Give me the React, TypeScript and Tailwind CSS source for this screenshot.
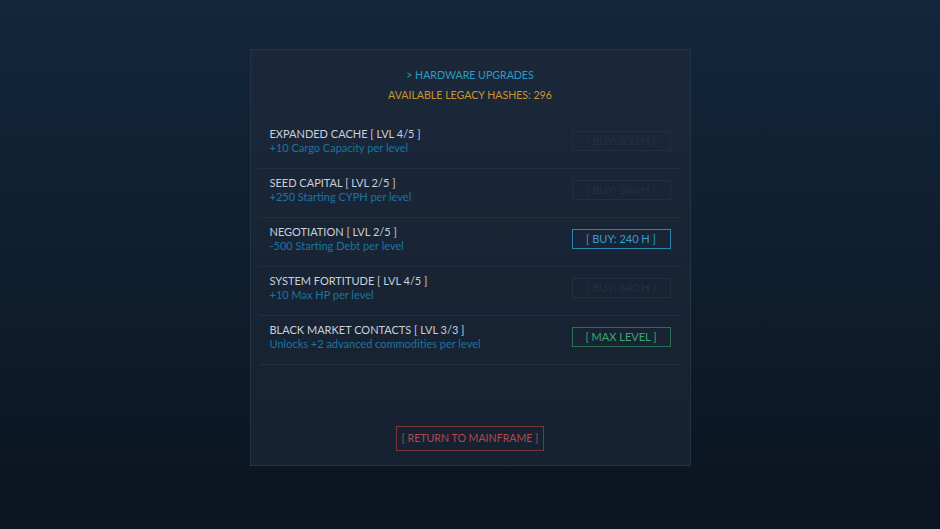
const upgrades = [
  { name: 'EXPANDED CACHE', lvl: '4/5', desc: '+10 Cargo Capacity per level', state: 'locked', label: '[ BUY: 800 H ]' },
  { name: 'SEED CAPITAL', lvl: '2/5', desc: '+250 Starting CYPH per level', state: 'locked', label: '[ BUY: 360 H ]' },
  { name: 'NEGOTIATION', lvl: '2/5', desc: '-500 Starting Debt per level', state: 'buy', label: '[ BUY: 240 H ]' },
  { name: 'SYSTEM FORTITUDE', lvl: '4/5', desc: '+10 Max HP per level', state: 'locked', label: '[ BUY: 640 H ]' },
  { name: 'BLACK MARKET CONTACTS', lvl: '3/3', desc: 'Unlocks +2 advanced commodities per level', state: 'max', label: '[ MAX LEVEL ]' },
];

function UpgradeButton({ state, label }: { state: string; label: string }) {
  if (state === 'buy') {
    return (
      <button className="h-[20px] w-[99px] whitespace-nowrap border border-[#2a86ad] text-[11px] leading-none text-[#3a9ccc]">
        {label}
      </button>
    );
  }
  if (state === 'max') {
    return (
      <button className="h-[20px] w-[99px] whitespace-nowrap border border-[#2b7050] text-[11px] leading-none text-[#3aa870]">
        {label}
      </button>
    );
  }
  return (
    <button className="h-[20px] w-[99px] whitespace-nowrap border border-[#1e3043] text-[11px] leading-none text-[#1f3246]">
      {label}
    </button>
  );
}

export default function App() {
  return (
    <div
      className="min-h-screen bg-gradient-to-b from-[#13263c] via-[#0f1e2e] to-[#0b1420] pt-[49px] pb-[64px]"
      style={{ fontFamily: 'Lato, "Noto Sans", sans-serif' }}
    >
      <div className="mx-auto flex h-[417px] w-[441px] flex-col border border-[#233346] bg-gradient-to-b from-[#1b2839] to-[#162131] px-[8px]">
        <div className="flex flex-col items-center pt-[17px] pb-[17px]">
          <p className="text-[10.6px] leading-[16px] text-[#2b9ac6]">&gt; HARDWARE UPGRADES</p>
          <p className="mt-[4px] text-[10.6px] leading-[16px] text-[#c9952f]">AVAILABLE LEGACY HASHES: 296</p>
        </div>
        <div className="flex flex-col">
          {upgrades.map((u) => (
            <div key={u.name} className="flex h-[49px] items-center justify-between border-b border-[#1f3042] pb-[7px] pl-[11px] pr-[11px]">
              <div className="flex flex-col">
                <span className="text-[11px] leading-[15px] text-[#c8d0da]">
                  {u.name} [ LVL {u.lvl} ]
                </span>
                <span className="text-[11px] leading-[14px] text-[#1c74a0]">{u.desc}</span>
              </div>
              <UpgradeButton state={u.state} label={u.label} />
            </div>
          ))}
        </div>
        <div className="mt-auto flex justify-center pb-[14px]">
          <button className="h-[25px] w-[148px] whitespace-nowrap border border-[#7b3438] text-[10.6px] leading-none text-[#b24a4e]">
            [ RETURN TO MAINFRAME ]
          </button>
        </div>
      </div>
    </div>
  );
}
